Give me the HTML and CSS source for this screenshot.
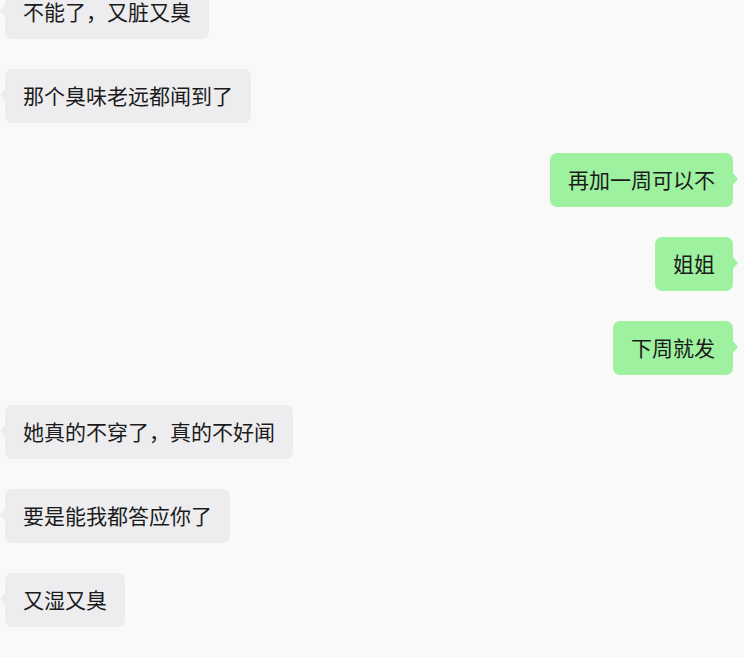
FILE: index.html
```html
<!DOCTYPE html>
<html lang="zh">
<head>
<meta charset="utf-8">
<link rel="stylesheet" href="styles.css">
</head>
<body>
<div class="chat">
  <div class="msg left"><div class="bubble">不能了，又脏又臭</div></div>
  <div class="msg left"><div class="bubble">那个臭味老远都闻到了</div></div>
  <div class="msg right"><div class="bubble">再加一周可以不</div></div>
  <div class="msg right"><div class="bubble">姐姐</div></div>
  <div class="msg right"><div class="bubble">下周就发</div></div>
  <div class="msg left"><div class="bubble">她真的不穿了，真的不好闻</div></div>
  <div class="msg left"><div class="bubble">要是能我都答应你了</div></div>
  <div class="msg left"><div class="bubble">又湿又臭</div></div>
</div>
</body>
</html>
```
FILE: styles.css
```css
html, body {
  margin: 0;
  padding: 0;
  background: #f9f9f9;
  height: 100%;
  overflow: hidden;
}
.chat {
  display: flex;
  flex-direction: column;
  gap: 30px;
  margin-top: -15px;
  padding: 0 11px 0 5px;
  font-family: "Noto Sans CJK SC", "Noto Sans", sans-serif;
  font-size: 21px;
  color: #1b1b1b;
}
.msg {
  display: flex;
}
.msg.right {
  justify-content: flex-end;
}
.bubble {
  position: relative;
  padding: 11px 18px 13px;
  line-height: 30px;
  border-radius: 7px;
  white-space: nowrap;
}
.left .bubble {
  background: #ededef;
}
.right .bubble {
  background: #9ef19f;
}
.bubble::before {
  content: "";
  position: absolute;
  top: 50%;
  margin-top: -8px;
  border-style: solid;
  border-color: transparent;
  border-width: 7px 6px;
}
.left .bubble::before {
  left: -11px;
  border-right-color: #ededef;
}
.right .bubble::before {
  right: -11px;
  border-left-color: #9ef19f;
}
```
